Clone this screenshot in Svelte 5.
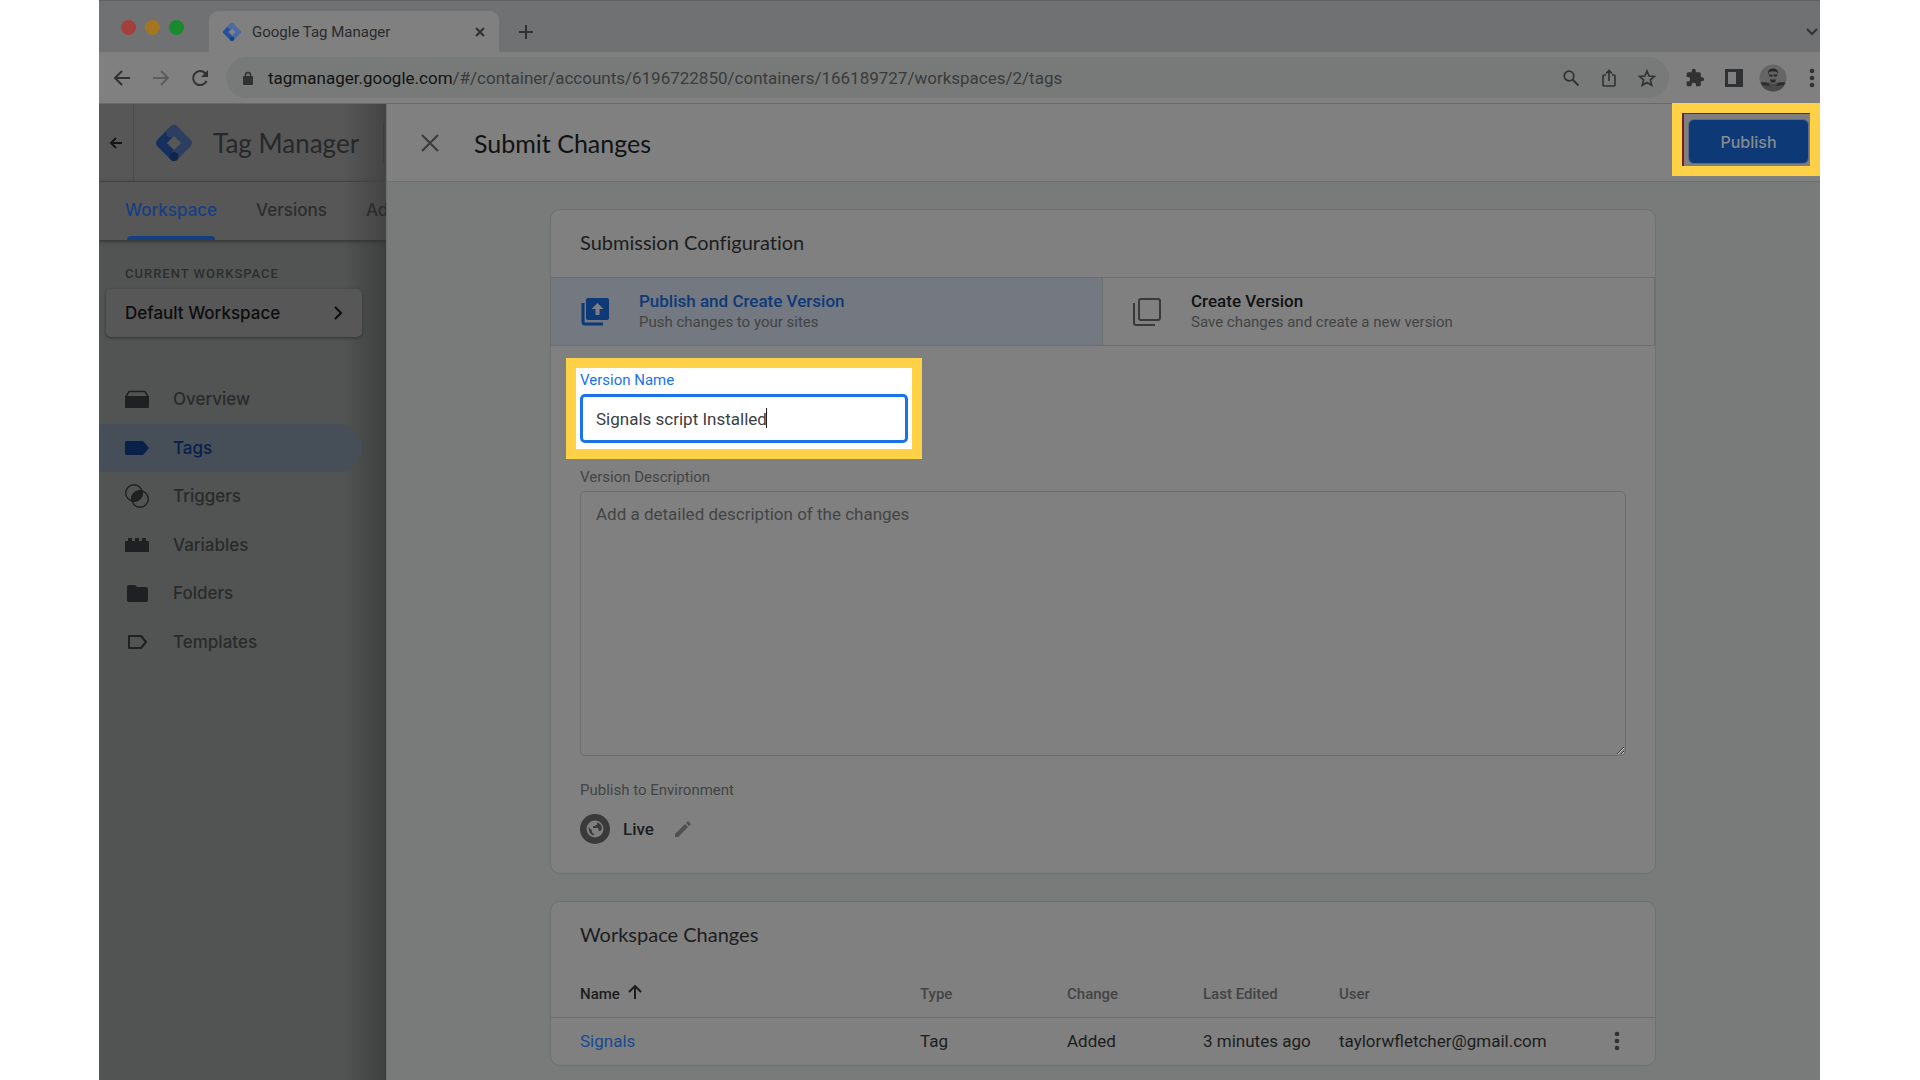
<script lang="ts">
    interface NavItem {
        id: string;
        label: string;
    }

    interface Change {
        name: string;
        type: string;
        change: string;
        edited: string;
        user: string;
    }

    const navItems: NavItem[] = [
        { id: "overview", label: "Overview" },
        { id: "tags", label: "Tags" },
        { id: "triggers", label: "Triggers" },
        { id: "variables", label: "Variables" },
        { id: "folders", label: "Folders" },
        { id: "templates", label: "Templates" },
    ];

    const changes: Change[] = [
        {
            name: "Signals",
            type: "Tag",
            change: "Added",
            edited: "3 minutes ago",
            user: "taylorwfletcher@gmail.com",
        },
    ];

    let activeNav = $state("tags");
    let mode = $state("publish");
    let versionName = $state("Signals script Installed");
    let description = $state("");
</script>

{#snippet logo()}
    <svg class="logo" viewBox="0 0 36 36" aria-hidden="true">
        <g stroke-width="9" stroke-linejoin="round" stroke-linecap="round">
            <path d="M18 31.500 4.500 18 18 4.500" stroke="#152f5e" />
            <path d="m14.500 8 3.500-3.500L31.500 18 18 31.500" stroke="#2d3f60" />
        </g>
        <circle cx="18" cy="31.500" r="4.500" fill="#0f254b" stroke="none" />
    </svg>
{/snippet}

{#snippet kebab()}
    <svg width="6" height="22" viewBox="0 0 6 22" fill="currentColor" aria-hidden="true">
        <circle cx="3" cy="4" r="2.300" />
        <circle cx="3" cy="11" r="2.300" />
        <circle cx="3" cy="18" r="2.300" />
    </svg>
{/snippet}

<div class="window">
    <div class="tab-strip">
        <div class="lights">
            <span class="red"></span>
            <span class="amber"></span>
            <span class="green"></span>
        </div>
        <div class="tab">
            {@render logo()}
            <span class="tab-title">Google Tag Manager</span>
            <button class="icon" aria-label="Close tab">
                <svg width="12" height="12" viewBox="0 0 12 12"><path d="m2 2 8 8M10 2l-8 8" /></svg>
            </button>
        </div>
        <button class="icon new-tab" aria-label="New tab">
            <svg width="16" height="16" viewBox="0 0 16 16"><path d="M8 1v14M1 8h14" /></svg>
        </button>
        <button class="icon tab-search" aria-label="Search tabs">
            <svg width="12" height="8" viewBox="0 0 12 8"><path d="m1 1 5 5 5-5" /></svg>
        </button>
    </div>

    <div class="toolbar">
        <div class="history">
            <button class="icon" aria-label="Back">
                <svg width="18" height="18" viewBox="0 0 18 18"><path d="M17 9H2M9 2 2 9l7 7" /></svg>
            </button>
            <button class="icon faded" aria-label="Forward">
                <svg width="18" height="18" viewBox="0 0 18 18"><path d="M1 9h15M9 2l7 7-7 7" /></svg>
            </button>
            <button class="icon" aria-label="Reload">
                <svg width="18" height="18" viewBox="0 0 18 18">
                    <path d="M15.500 12A7 7 0 1 1 14 4l2 2" />
                    <path d="M17 1v7h-7z" fill="currentColor" stroke="none" />
                </svg>
            </button>
        </div>
        <div class="omnibox">
            <svg class="lock" width="12" height="14" viewBox="0 0 12 14">
                <path d="M3.500 6V4a2.500 2.500 0 0 1 5 0v2" stroke-width="1.500" />
                <rect x="1" y="5" width="10" height="9" rx="1" fill="currentColor" stroke="none" />
            </svg>
            <span class="url"><b>tagmanager.google.com</b>/#/container/accounts/6196722850/containers/166189727/workspaces/2/tags</span>
            <button class="icon" aria-label="Zoom">
                <svg width="18" height="18" viewBox="0 0 18 18"><circle cx="7" cy="7" r="4.800" stroke-width="1.700" /><path d="m10.500 10.500 6 6" /></svg>
            </button>
            <button class="icon" aria-label="Share">
                <svg width="16" height="18" viewBox="0 0 16 18"><path d="M5 6H3q-1 0-1 1v9q0 1 1 1h10q1 0 1-1V7q0-1-1-1h-2M8 12V2M5 4.500l3-3 3 3" stroke-width="1.600" /></svg>
            </button>
            <button class="icon" aria-label="Bookmark">
                <svg width="18" height="18" viewBox="0 0 18 18"><path d="m9 2 2.100 5 5.400.400-4.100 3.500 1.300 5.300L9 13.400l-4.700 2.800 1.300-5.300L1.500 7.400 6.900 7z" stroke-width="1.700" /></svg>
            </button>
        </div>
        <div class="extensions">
            <button class="icon" aria-label="Extensions">
                <svg width="20" height="20" viewBox="0 0 24 24">
                    <path fill="currentColor" stroke="none" d="M20.500 11H19V7a2 2 0 0 0-2-2h-4V3.500a2.500 2.500 0 0 0-5 0V5H4a2 2 0 0 0-2 2v3.800h1.500a2.700 2.700 0 0 1 0 5.400H2V20a2 2 0 0 0 2 2h3.800v-1.500a2.700 2.700 0 0 1 5.400 0V22H17a2 2 0 0 0 2-2v-4h1.500a2.500 2.500 0 0 0 0-5z" />
                </svg>
            </button>
            <button class="icon" aria-label="Side panel">
                <svg width="18" height="18" viewBox="0 0 18 18"><path d="M1.500 1.500h15v15h-15z" stroke-width="3" /><path d="M11 1h6v16h-6z" fill="currentColor" stroke="none" /></svg>
            </button>
            <button class="icon" aria-label="Profile">
                <svg width="28" height="28" viewBox="0 0 28 28">
                    <g stroke="none">
                        <circle cx="14" cy="14" r="13.500" fill="#666666" />
                        <path d="M1.500 19q5-1.500 9-.500 3.500 3 7 0 4-1 9 .500a13.500 13.500 0 0 1-25 0z" fill="#4a4a4a" />
                        <path d="m2 18 7 1 2 3-8-1zM26 18l-7 1-2 3 8-1z" fill="#2c2c2c" />
                        <ellipse cx="14" cy="12" rx="4.500" ry="6.500" fill="#626262" />
                        <path d="M9 11q-1-6.500 5-6.500T19 11l-1-3q-4-1.500-8 0z" fill="#252525" />
                        <path d="M10 10.500h3.500v2H10zM14.500 10.500H18v2h-3.500zM11 15.500h6l-1 3h-4z" fill="#2b2b2b" />
                    </g>
                </svg>
            </button>
            <button class="icon" aria-label="Menu">{@render kebab()}</button>
        </div>
    </div>

    <div class="page">
        <aside class="app">
            <header class="app-header">
                <button class="icon app-back" aria-label="Back to accounts">
                    <svg width="14" height="14" viewBox="0 0 14 14"><path d="M13 7H2M7 2 2 7l5 5" /></svg>
                </button>
                {@render logo()}
                <span class="app-name">Tag Manager</span>
                <span class="rule"></span>
            </header>
            <nav class="app-tabs">
                <a class="current" href="#workspace">Workspace</a>
                <a href="#versions">Versions</a>
                <a href="#admin">Admin</a>
            </nav>
            <div class="side">
                <p class="side-label">CURRENT WORKSPACE</p>
                <button class="workspace">
                    Default Workspace
                    <svg width="10" height="16" viewBox="0 0 10 16"><path d="m2 2 6 6-6 6" /></svg>
                </button>
                <nav class="side-nav">
                    {#each navItems as item (item.id)}
                        <a href="#{item.id}" class:active={item.id === activeNav} onclick={() => (activeNav = item.id)}>
                            <svg width="24" height="24" viewBox="0 0 24 24" fill="currentColor" aria-hidden="true">
                                {#if item.id === "overview"}
                                    <path d="M0 9h24v11a1 1 0 0 1-1 1H1a1 1 0 0 1-1-1z" />
                                    <path d="M1 9.500 4 4.500h16l3 5" fill="none" stroke="currentColor" stroke-width="1.500" />
                                {:else if item.id === "tags"}
                                    <path d="M1 5h16q1 0 1.500.600L24 12l-5.500 6.400Q18 19 17 19H1a1 1 0 0 1-1-1V6a1 1 0 0 1 1-1z" />
                                {:else if item.id === "triggers"}
                                    <g fill="none" stroke="currentColor" stroke-width="1.400">
                                        <circle cx="9" cy="9" r="8.300" />
                                        <circle cx="15" cy="15" r="8.300" />
                                    </g>
                                    <path d="M17.300 6.700A8.300 8.300 0 0 1 6.700 17.300 8.300 8.300 0 0 1 17.300 6.700z" />
                                {:else if item.id === "variables"}
                                    <path d="M0 8h3V5h4v3h3V5h4v3h3V5h4v3h3v11H0z" />
                                {:else if item.id === "folders"}
                                    <path d="M4 4h6l2 2h9q2 0 2 2v11q0 2-2 2H4q-2 0-2-2V6q0-2 2-2z" />
                                {:else}
                                    <path d="M4 6h12l5 6-5 6H4z" fill="none" stroke="currentColor" stroke-width="2" stroke-linejoin="round" />
                                {/if}
                            </svg>
                            {item.label}
                        </a>
                    {/each}
                </nav>
            </div>
        </aside>

        <main class="sheet">
            <header class="sheet-header">
                <button class="icon sheet-close" aria-label="Close">
                    <svg width="18" height="18" viewBox="0 0 18 18"><path d="m1 1 16 16M17 1 1 17" /></svg>
                </button>
                <h1>Submit Changes</h1>
                <div class="callout publish-callout">
                    <button class="publish">Publish</button>
                </div>
            </header>

            <div class="content">
                <section class="card">
                    <h2>Submission Configuration</h2>
                    <div class="modes">
                        <button class="mode" class:selected={mode === "publish"} onclick={() => (mode = "publish")}>
                            <svg width="28" height="28" viewBox="0 0 28 28" aria-hidden="true">
                                <path d="M2 5v19q0 2 2 2h18" stroke-width="3" />
                                <rect x="5" y="0" width="23" height="22" rx="2" fill="currentColor" stroke="none" />
                                <path d="m16.500 5 6 6h-4v6h-4v-6h-4z" fill="#7d8088" stroke="none" />
                            </svg>
                            <span>
                                <strong>Publish and Create Version</strong>
                                <small>Push changes to your sites</small>
                            </span>
                        </button>
                        <button class="mode" class:selected={mode === "create"} onclick={() => (mode = "create")}>
                            <svg width="28" height="28" viewBox="0 0 28 28" aria-hidden="true">
                                <path d="M1 5v20q0 2 2 2h19" />
                                <rect x="6" y="1" width="21" height="21" rx="2" />
                            </svg>
                            <span>
                                <strong>Create Version</strong>
                                <small>Save changes and create a new version</small>
                            </span>
                        </button>
                    </div>
                    <div class="form">
                        <div class="callout name-callout">
                            <label for="version-name">Version Name</label>
                            <div class="name-field">
                                <input id="version-name" type="text" bind:value={versionName} />
                                <span class="caret"></span>
                            </div>
                        </div>
                        <label for="version-description">Version Description</label>
                        <textarea id="version-description" placeholder="Add a detailed description of the changes" bind:value={description}></textarea>
                        <p class="env-label">Publish to Environment</p>
                        <div class="environment">
                            <svg width="30" height="30" viewBox="0 0 30 30" aria-hidden="true">
                                <g stroke="none">
                                    <circle cx="15" cy="15" r="15" fill="#3a3a3a" />
                                    <circle cx="15" cy="15" r="8.500" fill="#808080" />
                                    <path d="m8.500 13 3.500 3.500v2l2 1.500v1.500q-5.500-1-5.500-8.500zM17 8.500v2l-2 1.500h-2v2h5l1 3h1.500q3-4-.500-7-1-1-3-1.500z" fill="#3a3a3a" />
                                </g>
                            </svg>
                            <strong>Live</strong>
                            <button class="icon edit" aria-label="Edit environment">
                                <svg width="16" height="16" viewBox="0 0 16 16" fill="currentColor"><path d="M0 13 10 3l3 3L3 16H0zM11 2l2-2 3 3-2 2z" /></svg>
                            </button>
                        </div>
                    </div>
                </section>

                <section class="card">
                    <h2>Workspace Changes</h2>
                    <table>
                        <thead>
                            <tr>
                                <th class="name-col sorted">
                                    Name
                                    <svg width="14" height="14" viewBox="0 0 14 14"><path d="M7 14V1M1 7l6-6 6 6" /></svg>
                                </th>
                                <th class="type-col">Type</th>
                                <th class="mid-col">Change</th>
                                <th class="mid-col">Last Edited</th>
                                <th>User</th>
                                <th class="menu-col" aria-label="Actions"></th>
                            </tr>
                        </thead>
                        <tbody>
                            {#each changes as row (row.name)}
                                <tr>
                                    <td><a href="#signals">{row.name}</a></td>
                                    <td>{row.type}</td>
                                    <td>{row.change}</td>
                                    <td>{row.edited}</td>
                                    <td>{row.user}</td>
                                    <td class="menu-col">
                                        <button class="icon" aria-label="More actions">{@render kebab()}</button>
                                    </td>
                                </tr>
                            {/each}
                        </tbody>
                    </table>
                </section>
            </div>
        </main>
    </div>
</div>

<style>
    :global(body) {
        margin: 0;
        background: #ffffff;
        overflow: hidden;
    }

    .window {
        display: flex;
        flex-direction: column;
        height: 100vh;
        margin: 0 100px 0 99px;
        overflow: hidden;
        background: #808080;
        color: #1c1d1e;
        font-family: Roboto, "Liberation Sans", sans-serif;
        font-size: 17px;
    }

    .window * {
        box-sizing: border-box;
    }

    svg {
        display: block;
        flex: none;
        fill: none;
        stroke: currentColor;
        stroke-width: 2;
    }

    svg[fill="currentColor"] {
        fill: currentColor;
        stroke: none;
    }

    button {
        font: inherit;
        color: inherit;
        border: none;
        background: none;
        padding: 0;
        cursor: pointer;
    }

    a {
        color: inherit;
        text-decoration: none;
    }

    .icon {
        display: flex;
        color: #2f3133;
    }

    .faded {
        color: #5b5c5d;
    }

    .logo {
        width: 36px;
        height: 36px;
    }

    /* browser chrome */
    .tab-strip {
        flex: none;
        display: flex;
        align-items: center;
        height: 52px;
        padding: 10px 2px 0 22px;
        background: #6f7173;
        border-top: 1px solid #5f6062;
    }

    .lights {
        display: flex;
        gap: 9px;
        width: 88px;
        padding-bottom: 8px;
    }

    .lights span {
        width: 15px;
        height: 15px;
        border-radius: 50%;
    }

    .red {
        background: #a4403c;
    }

    .amber {
        background: #a57622;
    }

    .green {
        background: #1a8a2f;
    }

    .tab {
        display: flex;
        align-items: center;
        width: 290px;
        height: 41px;
        padding: 0 13px 0 14px;
        border-radius: 9px 9px 0 0;
        background: #808080;
        font-size: 15px;
    }

    .tab .logo {
        width: 18px;
        height: 18px;
        filter: brightness(1.7);
    }

    .tab-title {
        flex: 1;
        padding-left: 11px;
        color: #2a2b2d;
    }

    .new-tab {
        margin-left: 19px;
    }

    .tab-search {
        margin-left: auto;
    }

    .toolbar {
        flex: none;
        display: flex;
        align-items: center;
        gap: 12px;
        height: 52px;
        padding-left: 14px;
        border-bottom: 1px solid #6a6b6b;
    }

    .history {
        display: flex;
        gap: 21px;
        margin-right: 5px;
    }

    .omnibox {
        flex: 1;
        display: flex;
        align-items: center;
        gap: 21px;
        height: 41px;
        padding: 0 13px 0 16px;
        border-radius: 21px;
        background: #787a79;
    }

    .lock {
        color: #2f3133;
    }

    .url {
        flex: 1;
        margin-left: -7px;
        color: #393b3c;
        white-space: nowrap;
    }

    .url b {
        font-weight: 400;
        color: #111213;
    }

    .extensions {
        display: flex;
        align-items: center;
        gap: 11px;
        margin-right: -6px;
    }

    .extensions .icon {
        justify-content: center;
        width: 28px;
    }

    /* page behind the sheet */
    .page {
        flex: 1;
        display: flex;
        min-height: 0;
    }

    .app {
        flex: none;
        display: flex;
        flex-direction: column;
        width: 287px;
        overflow: hidden;
        background: linear-gradient(90deg, #525453 85%, #3e3f3f);
        font-family: Inter, "Liberation Sans", sans-serif;
        font-weight: 500;
    }

    .app-header {
        display: flex;
        align-items: center;
        height: 78px;
        background: linear-gradient(90deg, #575757 85%, #444444);
        border-bottom: 1px solid #494a4a;
    }

    .app-back {
        align-items: center;
        justify-content: center;
        width: 35px;
        height: 77px;
        border-right: 1px solid #4b4c4c;
        color: #151616;
    }

    .app-header .logo {
        margin-left: 22px;
    }

    .app-name {
        flex: 1;
        padding-left: 21px;
        font-family: Lato, "Liberation Sans", sans-serif;
        font-size: 26px;
        font-weight: 400;
        color: #26282a;
        white-space: nowrap;
    }

    .rule {
        width: 1px;
        height: 39px;
        margin-right: 2px;
        background: #3b3c3c;
    }

    .app-tabs {
        display: flex;
        gap: 39px;
        height: 58px;
        padding-left: 26px;
        background: linear-gradient(90deg, #575757 85%, #444444);
        box-shadow: 0 1px 4px #2b2c2c;
        line-height: 56px;
        color: #2c2d2e;
    }

    .app-tabs .current {
        position: relative;
        color: #163f82;
    }

    .app-tabs .current::after {
        content: "";
        position: absolute;
        right: 2px;
        bottom: 0;
        left: 2px;
        height: 4px;
        border-radius: 4px 4px 0 0;
        background: #163f82;
    }

    .side {
        padding: 24px 24px 0 0;
    }

    .side-label {
        margin: 0 0 5px 26px;
        font-family: Roboto, sans-serif;
        font-size: 13px;
        line-height: 20px;
        letter-spacing: 1px;
        color: #2c2d2e;
    }

    .workspace {
        display: flex;
        align-items: center;
        justify-content: space-between;
        width: calc(100% - 7px);
        height: 48px;
        margin-left: 7px;
        padding: 0 19px;
        border-radius: 5px;
        background: #575757;
        box-shadow: 0 1px 3px #303131;
        color: #0c0d0d;
    }

    .side-nav {
        display: grid;
        grid-auto-rows: 1fr;
        height: 291px;
        margin-top: 38px;
        color: #292a2b;
    }

    .side-nav a {
        display: flex;
        align-items: center;
        gap: 24px;
        padding-left: 26px;
        border-radius: 0 25px 25px 0;
    }

    .side-nav svg {
        color: #1f2021;
    }

    .side-nav .active,
    .side-nav .active svg {
        color: #08204a;
    }

    .side-nav .active {
        background: #464e58;
    }

    /* submit sheet */
    .sheet {
        flex: 1;
        min-width: 0;
        background: #797b7a;
        border-left: 1px solid #6c6d6d;
    }

    .sheet-header {
        position: relative;
        display: flex;
        align-items: center;
        gap: 35px;
        height: 78px;
        padding-left: 34px;
        background: #808080;
        border-bottom: 1px solid #6f7070;
    }

    .sheet-close {
        color: #393a3b;
    }

    h1,
    h2 {
        margin: 0;
        font-family: Lato, "Liberation Sans", sans-serif;
        font-weight: 400;
        font-variant-ligatures: none;
    }

    h1 {
        font-size: 25px;
        color: #111213;
    }

    h2 {
        padding: 0 29px 3px;
        font-size: 20px;
        line-height: 64px;
    }

    .callout {
        border: 10px solid #ffd146;
    }

    .publish-callout {
        position: absolute;
        top: -1px;
        right: 0;
        padding: 6px 1px 2px 6px;
        background: #7f7f7f;
        box-shadow: inset 2px 1px #7b1d12;
    }

    .publish {
        display: block;
        width: 121px;
        height: 45px;
        border: 1px solid #5e6d84;
        border-radius: 6px;
        background: #0d3a77;
        font-family: Inter, "Liberation Sans", sans-serif;
        font-size: 16px;
        font-weight: 500;
        color: #868b92;
    }

    .content {
        display: flex;
        flex-direction: column;
        gap: 27px;
        padding: 27px 164px 0 163px;
    }

    .card {
        border: 1px solid #6f7170;
        border-radius: 10px;
        background: #808080;
        overflow: hidden;
    }

    .modes {
        display: grid;
        grid-template-columns: 1fr 1fr;
        border-top: 1px solid #6c6d6d;
        border-bottom: 1px solid #6c6d6d;
    }

    .mode {
        display: flex;
        align-items: center;
        gap: 30px;
        height: 67px;
        padding-left: 30px;
        border-right: 1px solid #6c6d6d;
        text-align: left;
        color: #383939;
    }

    .mode strong,
    .mode small {
        display: block;
        line-height: 21px;
    }

    .mode strong {
        font-weight: 500;
        color: #111213;
    }

    .mode small {
        font-size: 15px;
        color: #434445;
    }

    .selected {
        background: #747880;
    }

    .selected,
    .selected strong {
        color: #0d3a77;
    }

    .form {
        display: flex;
        flex-direction: column;
        padding: 12px 29px 29px;
    }

    label,
    .env-label {
        margin: 0;
        font-size: 15px;
        line-height: 20px;
        color: #434445;
    }

    .name-callout {
        width: 356px;
        margin: 0 0 8px -14px;
        padding: 2px 4px 6px;
        background: #ffffff;
    }

    .name-callout label {
        display: block;
        margin-bottom: 4px;
        color: #1a73e8;
    }

    .name-field {
        position: relative;
    }

    input,
    textarea {
        display: block;
        width: 100%;
        margin: 0;
        font: inherit;
        color: #3c4043;
        outline: none;
    }

    input {
        height: 49px;
        padding: 0 13px;
        border: 3px solid #1a73e8;
        border-radius: 5px;
        background: #ffffff;
    }

    .caret {
        position: absolute;
        top: 14px;
        left: 186px;
        width: 1px;
        height: 20px;
        background: #202124;
    }

    textarea {
        height: 265px;
        margin-top: 4px;
        padding: 12px 15px;
        border: 1px solid #6c6d6d;
        border-radius: 5px;
        background: none;
    }

    textarea::placeholder {
        color: #434445;
    }

    .env-label {
        margin-top: 24px;
    }

    .environment {
        display: flex;
        align-items: center;
        margin-top: 14px;
    }

    .environment strong {
        padding: 0 21px 0 13px;
        font-weight: 500;
    }

    .edit {
        color: #505050;
    }

    table {
        width: 100%;
        border-collapse: collapse;
        table-layout: fixed;
    }

    th,
    td {
        height: 48px;
        padding: 0;
        text-align: left;
    }

    th {
        padding-top: 2px;
        border-bottom: 1px solid #6c6d6d;
        font-size: 15px;
        font-weight: 500;
        color: #434445;
    }

    th:first-child,
    td:first-child {
        padding-left: 29px;
    }

    .sorted {
        color: #1c1d1e;
    }

    .sorted svg {
        display: inline-block;
        margin-left: 4px;
    }

    .name-col {
        width: 369px;
    }

    .type-col {
        width: 147px;
    }

    .mid-col {
        width: 136px;
    }

    .menu-col {
        width: 41px;
    }

    td a {
        color: #174a91;
    }
</style>
